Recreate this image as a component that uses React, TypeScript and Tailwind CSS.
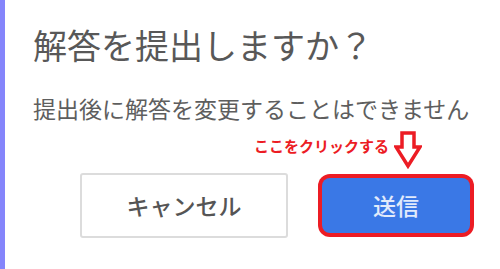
export default function App() {
  return (
    <div
      className="flex h-[269px] w-[500px] overflow-hidden bg-white"
      style={{ fontFamily: '"Noto Sans CJK JP", "Noto Sans", sans-serif' }}
    >
      <div className="w-[5px] bg-[#8585fb]" />
      <div className="relative flex-1 pl-[28px] pt-[25px]">
        <h1 className="text-[34px] leading-[40px] text-[#585858]">解答を提出しますか？</h1>
        <p className="mt-[28px] text-[23px] leading-[30px] text-[#5e5e5e]">
          提出後に解答を変更することはできません
        </p>

        <div className="mt-[50px] flex items-center gap-[34px] pl-[47px]">
          <button className="flex h-[65px] w-[208px] items-center justify-center rounded-[3px] border-2 border-[#dcdcdc] text-[23px] font-medium text-[#555]">
            キャンセル
          </button>
          <button className="flex h-[55px] w-[148px] items-center justify-center rounded-[8px] bg-[#3a78e6] text-[23px] font-medium text-white/85 ring-4 ring-[#ec1c24]">
            送信
          </button>
        </div>

        {/* annotation overlay */}
        <span className="absolute left-[249px] top-[136px] text-[15px] font-bold leading-[20px] text-[#ec1c24]">
          ここをクリックする
        </span>
        <svg
          className="absolute left-[389px] top-[131px]"
          width="28"
          height="38"
          viewBox="0 0 28 38"
        >
          <path
            d="M8 2 H20 V16 H26 L14 35 L2 16 H8 Z"
            fill="white"
            stroke="#ec1c24"
            strokeWidth="3.5"
            strokeLinejoin="miter"
          />
        </svg>
      </div>
    </div>
  )
}
